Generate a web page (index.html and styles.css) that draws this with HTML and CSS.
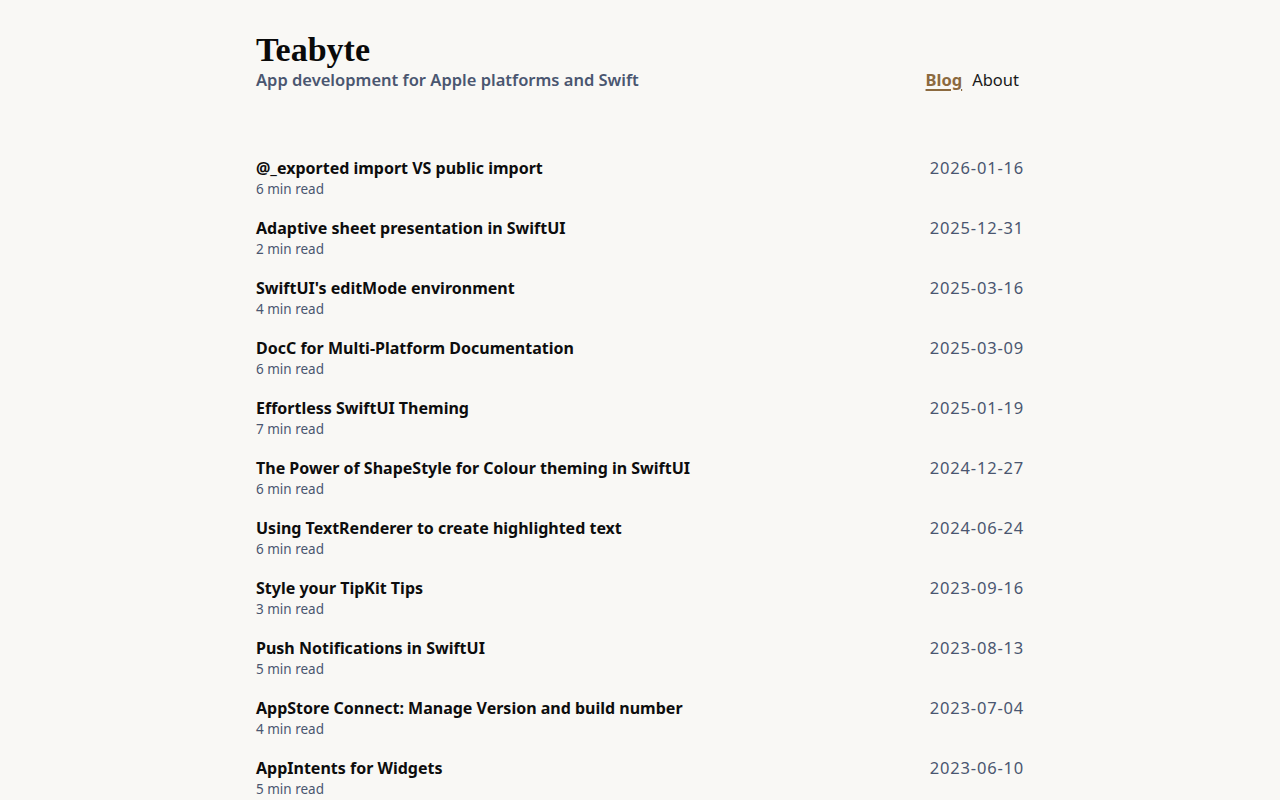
FILE: index.html
```html
<!DOCTYPE html>
<html lang="en">
<head>
<meta charset="utf-8">
<title>Teabyte</title>
<link rel="stylesheet" href="styles.css">
</head>
<body>
<div class="page">
  <header class="header">
    <div class="brand">
      <a class="site-title" href="#">Teabyte</a>
      <p class="tagline">App development for Apple platforms and Swift</p>
    </div>
    <nav class="nav">
      <a class="nav-link active" href="#">Blog</a>
      <a class="nav-link" href="#">About</a>
    </nav>
  </header>
  <main class="posts">
    <a class="post" href="#"><div class="post-main"><span class="post-title">@_exported import VS public import</span><span class="post-read">6 min read</span></div><span class="post-date">2026-01-16</span></a>
    <a class="post" href="#"><div class="post-main"><span class="post-title">Adaptive sheet presentation in SwiftUI</span><span class="post-read">2 min read</span></div><span class="post-date">2025-12-31</span></a>
    <a class="post" href="#"><div class="post-main"><span class="post-title">SwiftUI's editMode environment</span><span class="post-read">4 min read</span></div><span class="post-date">2025-03-16</span></a>
    <a class="post" href="#"><div class="post-main"><span class="post-title">DocC for Multi-Platform Documentation</span><span class="post-read">6 min read</span></div><span class="post-date">2025-03-09</span></a>
    <a class="post" href="#"><div class="post-main"><span class="post-title">Effortless SwiftUI Theming</span><span class="post-read">7 min read</span></div><span class="post-date">2025-01-19</span></a>
    <a class="post" href="#"><div class="post-main"><span class="post-title">The Power of ShapeStyle for Colour theming in SwiftUI</span><span class="post-read">6 min read</span></div><span class="post-date">2024-12-27</span></a>
    <a class="post" href="#"><div class="post-main"><span class="post-title">Using TextRenderer to create highlighted text</span><span class="post-read">6 min read</span></div><span class="post-date">2024-06-24</span></a>
    <a class="post" href="#"><div class="post-main"><span class="post-title">Style your TipKit Tips</span><span class="post-read">3 min read</span></div><span class="post-date">2023-09-16</span></a>
    <a class="post" href="#"><div class="post-main"><span class="post-title">Push Notifications in SwiftUI</span><span class="post-read">5 min read</span></div><span class="post-date">2023-08-13</span></a>
    <a class="post" href="#"><div class="post-main"><span class="post-title">AppStore Connect: Manage Version and build number</span><span class="post-read">4 min read</span></div><span class="post-date">2023-07-04</span></a>
    <a class="post" href="#"><div class="post-main"><span class="post-title">AppIntents for Widgets</span><span class="post-read">5 min read</span></div><span class="post-date">2023-06-10</span></a>
  </main>
</div>
</body>
</html>
```

FILE: styles.css
```css
* { box-sizing: border-box; }
html, body { margin: 0; padding: 0; }
body {
  background: #f9f8f5;
  color: #111111;
  font-family: "Noto Sans", "Open Sans", sans-serif;
}
a { text-decoration: none; color: inherit; }
.page {
  width: 768px;
  margin: 0 auto;
  padding-top: 28px;
}
.header {
  display: flex;
  justify-content: space-between;
  align-items: flex-end;
  padding-right: 5px;
}
.brand { display: flex; flex-direction: column; }
.site-title {
  font-family: "Liberation Serif", "DejaVu Serif", serif;
  font-weight: 700;
  font-size: 34px;
  line-height: 38px;
  padding-top: 3px;
  color: #0a0a0a;
}
.tagline {
  margin: 0;
  font-size: 16.5px;
  font-weight: 600;
  line-height: 22px;
  color: #4a5670;
}
.nav {
  display: flex;
  gap: 10px;
  font-size: 16.5px;
  line-height: 22px;
}
.nav-link { color: #1a1a1a; }
.nav-link.active {
  color: #8c6a3f;
  font-weight: 700;
  text-decoration: underline;
  text-decoration-thickness: 2px;
  text-underline-offset: 3px;
}
.posts {
  margin-top: 66px;
  display: flex;
  flex-direction: column;
}
.post {
  display: flex;
  justify-content: space-between;
  align-items: flex-start;
  height: 60px;
}
.post-main { display: flex; flex-direction: column; }
.post-title {
  font-size: 16px;
  font-weight: 700;
  line-height: 22px;
  color: #0d0d0d;
}
.post-read {
  font-size: 13.5px;
  line-height: 21px;
  color: #4a5670;
}
.post-date {
  font-size: 16.5px;
  line-height: 22px;
  color: #4a5670;
  letter-spacing: 0.8px;
}
```
